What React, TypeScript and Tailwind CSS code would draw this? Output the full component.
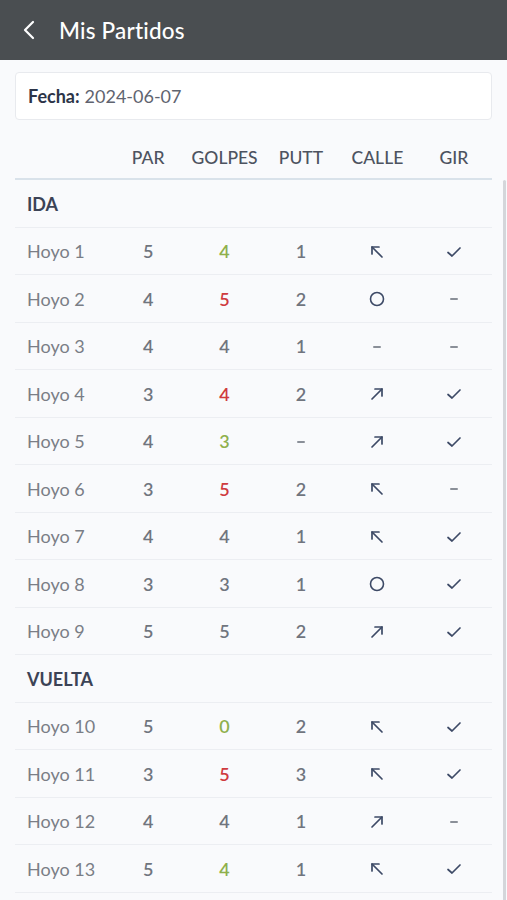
import React from 'react';

type Hole = { n: number; par: number; golpes: number; putt: string; calle: 'left' | 'right' | 'circle' | '-'; gir: boolean };

const ida: Hole[] = [
  { n: 1, par: 5, golpes: 4, putt: '1', calle: 'left', gir: true },
  { n: 2, par: 4, golpes: 5, putt: '2', calle: 'circle', gir: false },
  { n: 3, par: 4, golpes: 4, putt: '1', calle: '-', gir: false },
  { n: 4, par: 3, golpes: 4, putt: '2', calle: 'right', gir: true },
  { n: 5, par: 4, golpes: 3, putt: '-', calle: 'right', gir: true },
  { n: 6, par: 3, golpes: 5, putt: '2', calle: 'left', gir: false },
  { n: 7, par: 4, golpes: 4, putt: '1', calle: 'left', gir: true },
  { n: 8, par: 3, golpes: 3, putt: '1', calle: 'circle', gir: true },
  { n: 9, par: 5, golpes: 5, putt: '2', calle: 'right', gir: true },
];

const vuelta: Hole[] = [
  { n: 10, par: 5, golpes: 0, putt: '2', calle: 'left', gir: true },
  { n: 11, par: 3, golpes: 5, putt: '3', calle: 'left', gir: true },
  { n: 12, par: 4, golpes: 4, putt: '1', calle: 'right', gir: false },
  { n: 13, par: 5, golpes: 4, putt: '1', calle: 'left', gir: true },
];

const Dash = () => <span className="block w-[8px] h-[2px] bg-[#8a8f98] rounded" />;

const Calle = ({ v }: { v: Hole['calle'] }) => {
  if (v === '-') return <Dash />;
  if (v === 'circle')
    return (
      <svg width="18" height="18" viewBox="0 0 18 18" fill="none" stroke="#3d4a66" strokeWidth="1.6">
        <circle cx="9" cy="9" r="6.5" />
      </svg>
    );
  return (
    <svg width="18" height="18" viewBox="0 0 18 18" fill="none" stroke="#3d4a66" strokeWidth="1.7" strokeLinecap="round" strokeLinejoin="round">
      {v === 'left' ? (
        <>
          <path d="M4 4 L14 14" />
          <path d="M4 11 L4 4 L11 4" />
        </>
      ) : (
        <>
          <path d="M14 4 L4 14" />
          <path d="M7 4 L14 4 L14 11" />
        </>
      )}
    </svg>
  );
};

const Check = () => (
  <svg width="18" height="18" viewBox="0 0 18 18" fill="none" stroke="#3d4a66" strokeWidth="1.7" strokeLinecap="round" strokeLinejoin="round">
    <path d="M3 9.5 L7 13 L15 5" />
  </svg>
);

const golpesColor = (h: Hole) => {
  if (h.golpes < h.par) return 'text-[#8fb04c]';
  if (h.golpes > h.par) return 'text-[#cf3b3f]';
  return 'text-[#70757e]';
};

const Row = ({ h }: { h: Hole }) => (
  <div className="grid grid-cols-[95px_repeat(5,1fr)] items-center h-[47.5px] pt-[2px] border-b border-[#eceef2] text-[18px]">
    <div className="pl-[12px] text-[#7a7e86]">Hoyo {h.n}</div>
    <div className="text-center font-semibold text-[#70757e]">{h.par}</div>
    <div className={`text-center font-semibold ${golpesColor(h)}`}>{h.golpes}</div>
    {h.putt === '-' ? (
      <div className="flex justify-center">
        <Dash />
      </div>
    ) : (
      <div className="text-center font-semibold text-[#70757e]">{h.putt}</div>
    )}
    <div className="flex justify-center">
      <Calle v={h.calle} />
    </div>
    <div className="flex justify-center">{h.gir ? <Check /> : <Dash />}</div>
  </div>
);

const Section = ({ title }: { title: string }) => (
  <div className="h-[47.5px] flex items-center pl-[12px] pt-[2px] border-b border-[#eceef2] text-[18px] font-bold text-[#3c4356]">
    {title}
  </div>
);

export default function App() {
  return (
    <div className="w-[507px] h-[900px] overflow-hidden bg-[#f9fafc]" style={{ fontFamily: 'Lato, "Open Sans", sans-serif' }}>
      <header className="h-[60px] bg-[#4a4e51] flex items-center pl-[20px] gap-[21px]">
        <svg width="18" height="22" viewBox="0 0 18 22" fill="none" stroke="white" strokeWidth="2.2" strokeLinecap="round" strokeLinejoin="round">
          <path d="M13 3 L5 11 L13 19" />
        </svg>
        <h1 className="text-white text-[22.5px] font-medium tracking-[0.2px] pt-[2px]">Mis Partidos</h1>
      </header>

      <div className="relative px-[15px] pt-[12px]">
        <div className="h-[48px] bg-white border border-[#e8eaee] rounded-[4px] flex items-center px-[12px] text-[18px]">
          <span className="font-bold text-[#2c3448]">Fecha:</span>
          <span className="ml-[5px] text-[#5f6470]">2024-06-07</span>
        </div>

        <div className="mt-[18px]">
          <div className="grid grid-cols-[95px_repeat(5,1fr)] items-center h-[42px] border-b-2 border-[#d9e2ea] text-[17.5px] text-[#4d5360] font-medium">
            <div />
            <div className="text-center">PAR</div>
            <div className="text-center">GOLPES</div>
            <div className="text-center">PUTT</div>
            <div className="text-center">CALLE</div>
            <div className="text-center">GIR</div>
          </div>
          <Section title="IDA" />
          {ida.map((h) => (
            <Row key={h.n} h={h} />
          ))}
          <Section title="VUELTA" />
          {vuelta.map((h) => (
            <Row key={h.n} h={h} />
          ))}
        </div>

        <div className="absolute right-[1px] top-[120px] w-[3px] h-[800px] bg-[#d4d6da] rounded" />
      </div>
    </div>
  );
}
